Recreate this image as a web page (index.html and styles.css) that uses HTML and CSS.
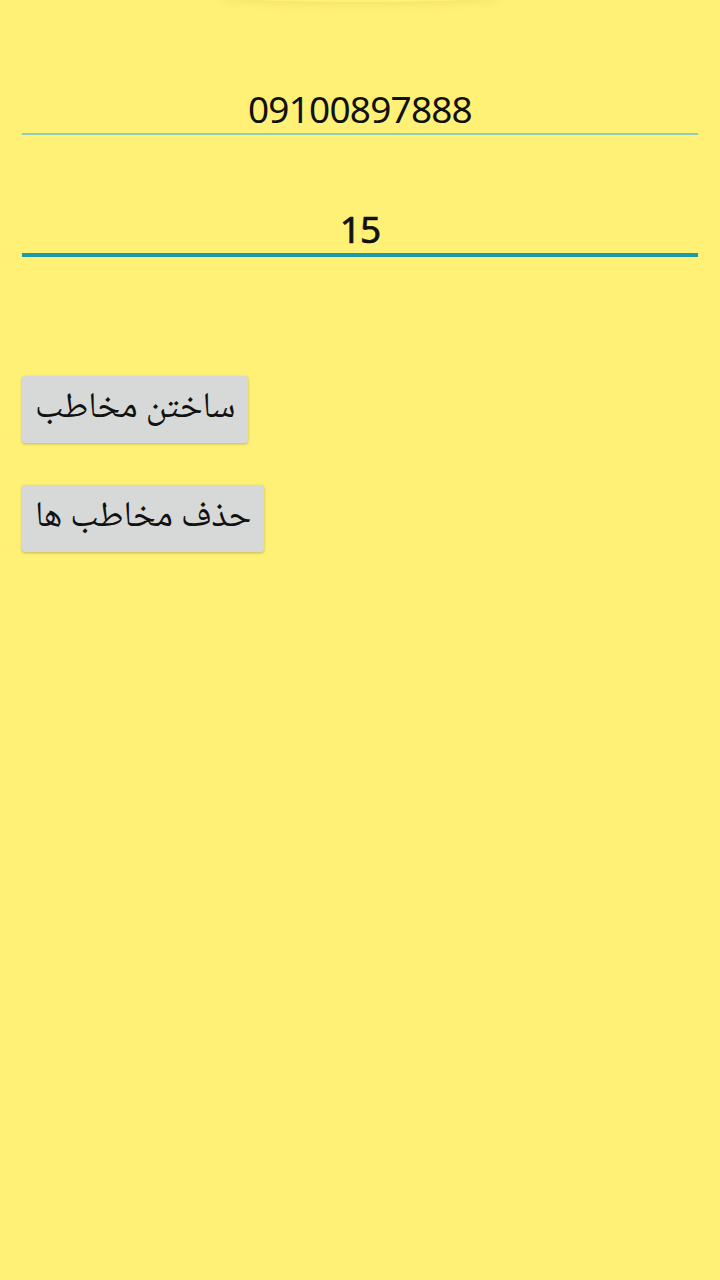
FILE: index.html
```html
<!DOCTYPE html>
<html lang="fa">
<head>
<meta charset="utf-8">
<link rel="stylesheet" href="styles.css">
</head>
<body>
<div class="toast-shadow"></div>
<main class="page">
  <div class="field field-phone"><span class="value">09100897888</span></div>
  <div class="field field-count"><span class="value">15</span></div>
  <div class="actions">
    <button class="btn" dir="rtl">ساختن مخاطب</button>
    <button class="btn" dir="rtl">حذف مخاطب ها</button>
  </div>
</main>
</body>
</html>
```
FILE: styles.css
```css
html, body {
  margin: 0;
  padding: 0;
  background: #fff176;
  width: 720px;
  height: 1280px;
  overflow: hidden;
}
body {
  font-family: "Noto Sans", "DejaVu Sans", sans-serif;
  color: #111;
}
.toast-shadow {
  position: absolute;
  left: 220px;
  top: -10px;
  width: 280px;
  height: 12px;
  border-radius: 50%;
  box-shadow: 0 2px 8px rgba(180, 150, 40, 0.18);
}
.page {
  padding: 85px 22px 0;
  display: flex;
  flex-direction: column;
}
.field {
  display: flex;
  justify-content: center;
  align-items: flex-end;
}
.field .value {
  font-size: 37px;
  line-height: 48px;
  letter-spacing: -0.8px;
}
.field-phone {
  height: 48px;
  border-bottom: 2px solid #8fcfc2;
}
.field-count {
  margin-top: 69px;
  height: 49px;
  border-bottom: 4px solid #1e9aa6;
}
.field-count .value {
  font-weight: 400;
  -webkit-text-stroke: 0.7px #111;
}
.actions {
  margin-top: 119px;
  display: flex;
  flex-direction: column;
  align-items: flex-start;
  gap: 42px;
}
.btn {
  font-family: "Noto Naskh Arabic", "Noto Sans Arabic", "DejaVu Sans", sans-serif;
  font-size: 36px;
  line-height: 67px;
  height: 67px;
  padding: 0 13px;
  background: #d7d8d8;
  color: #111;
  border: none;
  border-radius: 3px;
  box-shadow: 0 1px 3px rgba(0, 0, 0, 0.25);
}
```
